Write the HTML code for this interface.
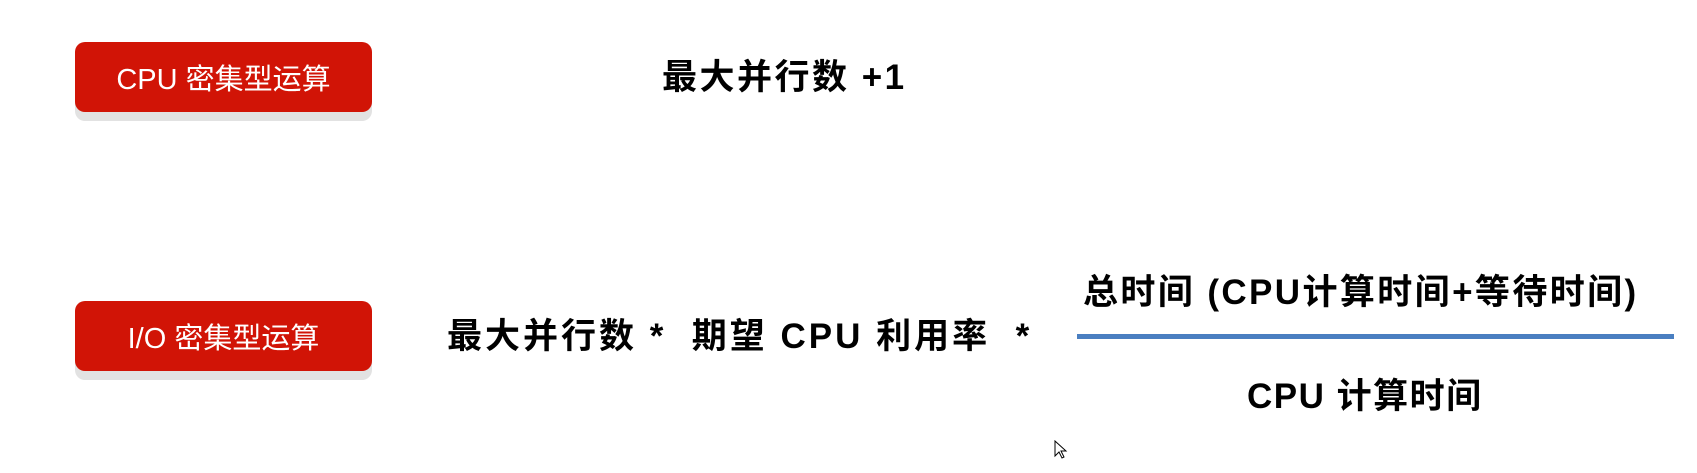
<!DOCTYPE html>
<html><head><meta charset="utf-8"><style>
body{margin:0;width:1697px;height:473px;background:#fff;position:relative;overflow:hidden;font-family:"Liberation Sans","Noto Sans CJK SC",sans-serif}
.btn{position:absolute;left:75px;width:297px;height:70px;background:#d11406;border-radius:10px;color:#fff;font-size:29px;display:flex;align-items:center;justify-content:center;box-shadow:0 9px 0 #e2e2e2}
.t{position:absolute;white-space:nowrap;color:#000;font-weight:bold;line-height:1}
</style></head><body>
<div class="btn" style="top:42px">CPU 密集型运算</div>
<div class="btn" style="top:301px">I/O 密集型运算</div>
<div class="t" style="left:662px;top:60px;font-size:35px;letter-spacing:2.5px">最大并行数 +1</div>
<div class="t" style="left:447px;top:319px;font-size:35px;letter-spacing:3px">最大并行数 *&nbsp; 期望 CPU 利用率&nbsp; *</div>
<div class="t" style="left:1083px;top:275px;font-size:35px;letter-spacing:2.4px">总时间 (CPU计算时间+等待时间)</div>
<div style="position:absolute;left:1077px;top:334px;width:597px;height:5px;background:#4a7fc1"></div>
<div class="t" style="left:1247px;top:379px;font-size:35px;letter-spacing:1.5px">CPU 计算时间</div>
<svg style="position:absolute;left:1054px;top:440px" width="14" height="20" viewBox="0 0 14 20"><path d="M1 1 L1 16 L5 12 L8 18 L10 17 L7 11 L12 11 Z" fill="#fff" stroke="#000" stroke-width="1"/></svg>
</body></html>
